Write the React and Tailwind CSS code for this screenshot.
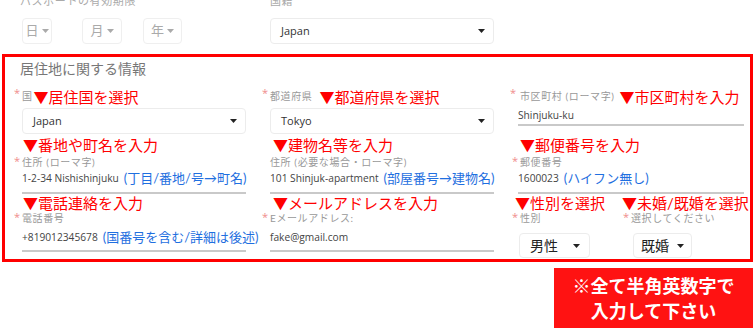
const Caret = ({ color = "#222" }) => (
  <svg width="7" height="4" viewBox="0 0 7 4" className="shrink-0">
    <path d="M0 0 L7 0 L3.5 4 Z" fill={color} />
  </svg>
);

const Star = () => (
  <span className="w-[8px] -ml-[8px] text-[#f08c8c] text-[11px] leading-[10px] self-start mt-[1px] font-['Open_Sans',sans-serif]">*</span>
);

const Label = ({ star = true, children, className = "" }) => (
  <div className={`flex items-start h-[14px] ${className}`}>
    {star && <Star />}
    <span className="text-[10px] leading-[14px] tracking-[0.6px] text-[#999] whitespace-nowrap">{children}</span>
  </div>
);

const Note = ({ children, className = "" }) => (
  <span className={`text-[15px] text-[#ff0000] whitespace-nowrap ${className}`}>{children}</span>
);

const Blue = ({ children }) => (
  <span className="ml-[5px] text-[13px] text-[#1f6fe0] whitespace-nowrap">{children}</span>
);

const Select = ({ value, className = "" }) => (
  <div className={`h-[26px] border border-[#ececec] rounded-[4px] bg-white flex items-center justify-between pl-[10px] pr-[8px] ${className}`}>
    <span className="text-[11px] text-[#333] font-['Open_Sans',sans-serif]">{value}</span>
    <Caret />
  </div>
);

const Field = ({ children, h = "h-[25px]", className = "" }) => (
  <div className={`${h} border-b-2 border-[#c9c9c9] flex items-center whitespace-nowrap ${className}`}>
    {children}
  </div>
);

const Value = ({ children }) => (
  <span className="text-[10.2px] text-[#444] font-['Open_Sans',sans-serif]">{children}</span>
);

export default function App() {
  return (
    <div className="w-[755px] h-[332px] bg-white overflow-hidden font-['Lato','Noto_Sans_CJK_JP',sans-serif]">
      {/* top section */}
      <div className="h-[54px] pl-[22px] grid grid-cols-[224px_224px_226px] gap-x-[24px]">
        <div>
          <div className="-mt-[7px] -ml-[2px] h-[16px] leading-[16px] text-[11px] tracking-[0.6px] text-[#aaa] whitespace-nowrap">
            パスポートの有効期限
          </div>
          <div className="mt-[9px] flex">
            {[
              ["日", "w-[30px]", ""],
              ["月", "w-[40px]", "ml-[30px]"],
              ["年", "w-[39px]", "ml-[21px]"],
            ].map(([t, w, m]) => (
              <div key={t} className={`${w} ${m} h-[26px] border border-[#efefef] rounded-[4px] flex items-center justify-center gap-[3px]`}>
                <span className="text-[13px] text-[#aaa]">{t}</span>
                <Caret color="#aaa" />
              </div>
            ))}
          </div>
        </div>
        <div>
          <div className="-mt-[7px] h-[16px] flex items-start">
            <span className="w-[8px] -ml-[8px] text-[#f08c8c] text-[11px] leading-[10px] font-['Open_Sans',sans-serif]">*</span>
            <span className="text-[11px] leading-[16px] tracking-[0.6px] text-[#aaa]">国籍</span>
          </div>
          <Select value="Japan" className="mt-[9px]" />
        </div>
        <div />
      </div>

      {/* red box */}
      <div className="ml-[2px] w-[751px] h-[208px] border-[3px] border-[#ff0000]">
        <div className="pl-[15px] mt-[2px] h-[20px] leading-[20px] text-[14px] text-[#777]">居住地に関する情報</div>

        {/* Row A */}
        <div className="mt-[8px] h-[48px] pl-[17px] grid grid-cols-[224px_224px_226px] gap-x-[24px]">
          <div>
            <div className="flex items-start h-[20px]">
              <Star />
              <span className="text-[10px] leading-[14px] tracking-[0.6px] text-[#999] mt-[2px]">国</span>
              <Note className="ml-[1px] leading-[20px]">▼居住国を選択</Note>
            </div>
            <Select value="Japan" className="mt-[1px]" />
          </div>
          <div>
            <div className="flex items-start h-[20px]">
              <Star />
              <span className="text-[10px] leading-[14px] tracking-[0.6px] text-[#999] mt-[2px]">都道府県</span>
              <Note className="ml-[7px] leading-[20px]">▼都道府県を選択</Note>
            </div>
            <Select value="Tokyo" className="mt-[1px]" />
          </div>
          <div>
            <div className="flex items-start h-[20px]">
              <Star />
              <span className="ml-[2px] text-[10px] leading-[14px] tracking-[0.6px] text-[#999] mt-[2px] whitespace-nowrap">市区町村 (ローマ字)</span>
              <Note className="ml-[5px] leading-[20px]">▼市区町村を入力</Note>
            </div>
            <Field h="h-[19px]">
              <Value>Shinjuku-ku</Value>
            </Field>
          </div>
        </div>

        {/* Row B */}
        <div className="h-[59px] pl-[17px] grid grid-cols-[224px_224px_226px] gap-x-[24px]">
          <div>
            <div className="h-[20px] leading-[20px] ml-[1px]"><Note>▼番地や町名を入力</Note></div>
            <Label>住所 (ローマ字)</Label>
            <Field className="pb-[3px]">
              <Value>1-2-34 Nishishinjuku</Value>
              <Blue>(丁目/番地/号→町名)</Blue>
            </Field>
          </div>
          <div>
            <div className="h-[20px] leading-[20px] ml-[3px]"><Note>▼建物名等を入力</Note></div>
            <Label star={false}>住所 (必要な場合・ローマ字)</Label>
            <Field className="pb-[3px]">
              <Value>101 Shinjuk-apartment</Value>
              <Blue>(部屋番号→建物名)</Blue>
            </Field>
          </div>
          <div>
            <div className="h-[20px] leading-[20px] ml-[2px]"><Note>▼郵便番号を入力</Note></div>
            <Label className="ml-[2px]">郵便番号</Label>
            <Field className="pb-[3px]">
              <Value>1600023</Value>
              <Blue>(ハイフン無し)</Blue>
            </Field>
          </div>
        </div>

        {/* Row C */}
        <div className="pl-[17px] grid grid-cols-[224px_224px_226px] gap-x-[24px]">
          <div>
            <div className="h-[17px] leading-[17px] ml-[1px]"><Note>▼電話連絡を入力</Note></div>
            <Label>電話番号</Label>
            <Field h="h-[27px]">
              <Value>+819012345678</Value>
              <Blue>(国番号を含む/詳細は後述)</Blue>
            </Field>
          </div>
          <div>
            <div className="h-[17px] leading-[17px] ml-[3px]"><Note>▼メールアドレスを入力</Note></div>
            <Label>Eメールアドレス:</Label>
            <Field h="h-[27px]">
              <Value>fake@gmail.com</Value>
            </Field>
          </div>
          <div className="flex">
            <div className="w-[113px] shrink-0">
              <div className="h-[17px] leading-[17px] -ml-[3px]"><Note>▼性別を選択</Note></div>
              <Label className="ml-[2px]">性別</Label>
              <div className="mt-[8px] ml-[1px] w-[71px] h-[25px] border border-[#ececec] rounded-[4px] flex items-center justify-between pl-[10px] pr-[9px]">
                <span className="text-[14px] text-[#222]">男性</span>
                <Caret />
              </div>
            </div>
            <div className="shrink-0">
              <div className="h-[17px] leading-[17px] -ml-[9px]"><Note>▼未婚/既婚を選択</Note></div>
              <Label>選択してください</Label>
              <div className="mt-[8px] ml-[2px] w-[59px] h-[25px] border border-[#ececec] rounded-[4px] flex items-center justify-between pl-[7px] pr-[7px]">
                <span className="text-[14px] text-[#222]">既婚</span>
                <Caret />
              </div>
            </div>
          </div>
        </div>
      </div>

      {/* notice button */}
      <div className="mt-[6px] ml-auto mr-[2px] w-[199px] h-[60px] bg-[#ff1212] flex flex-col items-center justify-center text-white font-bold text-[18px] leading-[25px] font-['Noto_Sans_CJK_JP',sans-serif]">
        <span>※全て半角英数字で</span>
        <span>入力して下さい</span>
      </div>
    </div>
  );
}
